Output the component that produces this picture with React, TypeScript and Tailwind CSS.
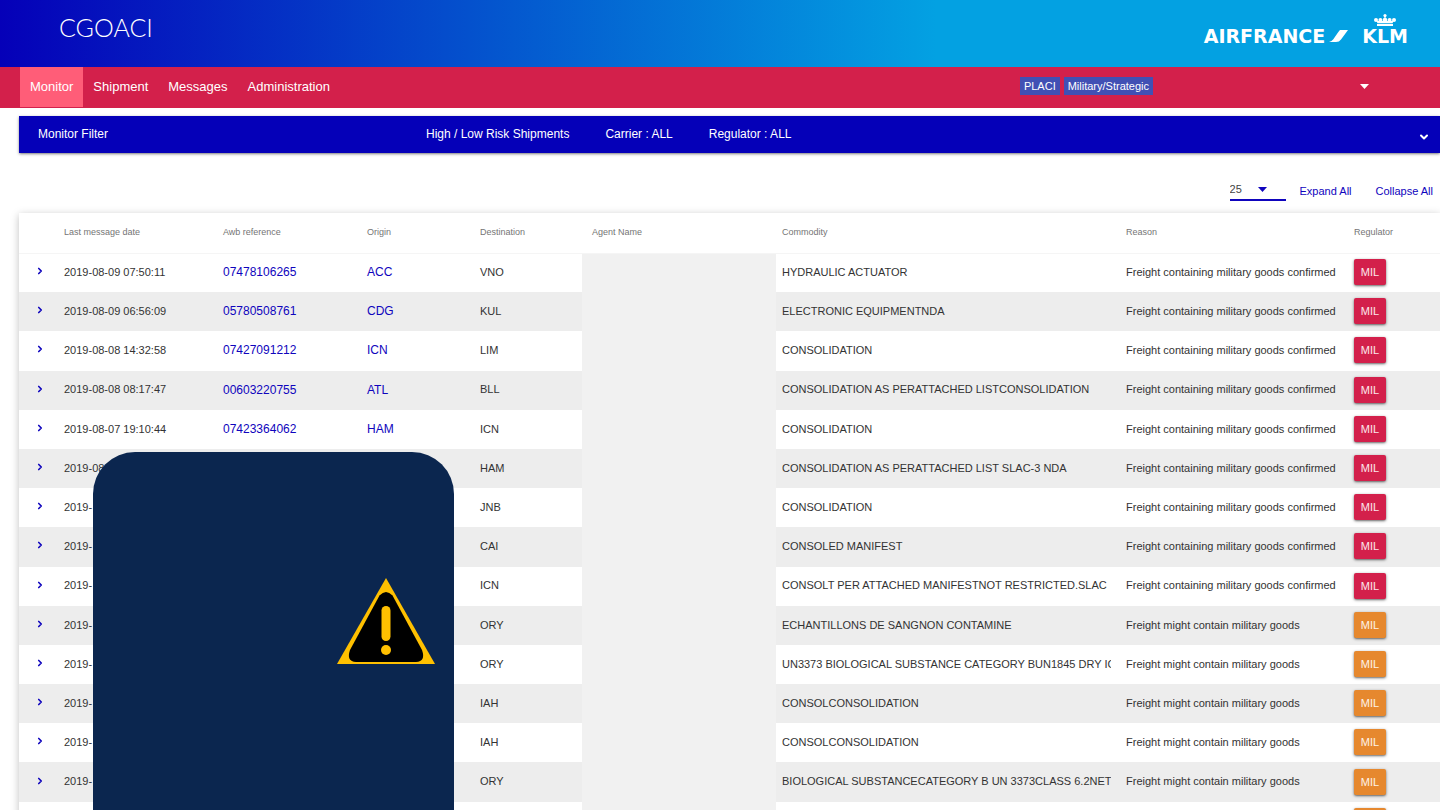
import React from "react";
import { ChevronDown, ChevronRight } from "lucide-react";

type Row = {
  date: string;
  awb: string;
  origin: string;
  destination: string;
  commodity: string;
  confirmed: boolean;
};

const rows: Row[] = [
  { date: "2019-08-09 07:50:11", awb: "07478106265", origin: "ACC", destination: "VNO", commodity: "HYDRAULIC ACTUATOR", confirmed: true },
  { date: "2019-08-09 06:56:09", awb: "05780508761", origin: "CDG", destination: "KUL", commodity: "ELECTRONIC EQUIPMENTNDA", confirmed: true },
  { date: "2019-08-08 14:32:58", awb: "07427091212", origin: "ICN", destination: "LIM", commodity: "CONSOLIDATION", confirmed: true },
  { date: "2019-08-08 08:17:47", awb: "00603220755", origin: "ATL", destination: "BLL", commodity: "CONSOLIDATION AS PERATTACHED LISTCONSOLIDATION", confirmed: true },
  { date: "2019-08-07 19:10:44", awb: "07423364062", origin: "HAM", destination: "ICN", commodity: "CONSOLIDATION", confirmed: true },
  { date: "2019-08", awb: "", origin: "", destination: "HAM", commodity: "CONSOLIDATION AS PERATTACHED LIST SLAC-3 NDA", confirmed: true },
  { date: "2019-", awb: "", origin: "", destination: "JNB", commodity: "CONSOLIDATION", confirmed: true },
  { date: "2019-", awb: "", origin: "", destination: "CAI", commodity: "CONSOLED MANIFEST", confirmed: true },
  { date: "2019-", awb: "", origin: "", destination: "ICN", commodity: "CONSOLT PER ATTACHED MANIFESTNOT RESTRICTED.SLAC", confirmed: true },
  { date: "2019-", awb: "", origin: "", destination: "ORY", commodity: "ECHANTILLONS DE SANGNON CONTAMINE", confirmed: false },
  { date: "2019-", awb: "", origin: "", destination: "ORY", commodity: "UN3373 BIOLOGICAL SUBSTANCE CATEGORY BUN1845 DRY IC", confirmed: false },
  { date: "2019-", awb: "", origin: "", destination: "IAH", commodity: "CONSOLCONSOLIDATION", confirmed: false },
  { date: "2019-", awb: "", origin: "", destination: "IAH", commodity: "CONSOLCONSOLIDATION", confirmed: false },
  { date: "2019-", awb: "", origin: "", destination: "ORY", commodity: "BIOLOGICAL SUBSTANCECATEGORY B UN 3373CLASS 6.2NET", confirmed: false },
  { date: "", awb: "", origin: "", destination: "", commodity: "", confirmed: false },
];

const navItems = ["Monitor", "Shipment", "Messages", "Administration"];

function Header() {
  return (
    <header className="flex h-[67px] shrink-0 items-start justify-between bg-linear-to-r/srgb from-[#0500b8] to-[#03a1e2] to-65% pr-8 pl-[59px] text-white">
      <h1 className="pt-[11px] font-['Lato'] text-[25px] leading-8 font-light">CGOACI</h1>
      <div className="flex items-end gap-[14px] pt-[14px] font-['DejaVu_Sans'] text-[19px] leading-5 font-bold" aria-label="Air France KLM">
        <span className="flex items-center gap-1">
          AIRFRANCE
          <svg className="h-3 w-[19px]" viewBox="0 0 19 12" fill="currentColor" aria-hidden="true">
            <path d="M11 0H19L12 9.500Q10.200 12 7 12H0Q2.800 11.300 4.300 9.300L9 2.500Q10.200 .7 11 0Z" />
          </svg>
        </span>
        <span className="flex flex-col items-center">
          <svg className="h-3 w-[22px]" viewBox="0 0 22 12" fill="currentColor" aria-hidden="true">
            <circle cx="11" cy="1.600" r="1.600" />
            <circle cx="2" cy="6" r="2" />
            <circle cx="6.400" cy="6" r="2" />
            <circle cx="11" cy="6" r="2.300" />
            <circle cx="15.600" cy="6" r="2" />
            <circle cx="20" cy="6" r="2" />
            <path d="M2.500 7L19.500 7L18.500 9.200H3.500Z" />
            <path d="M3 10H19V12H3Z" />
            <path d="M10.400 2H11.600V5H10.400Z" />
          </svg>
          <span>KLM</span>
        </span>
      </div>
    </header>
  );
}

function NavBar() {
  return (
    <nav className="flex h-[41px] shrink-0 items-stretch bg-[#d3204b] pl-5 text-[13px] text-white">
      {navItems.map((item, i) => (
        <a
          key={item}
          href="#"
          className={i === 0 ? "mb-px flex items-center bg-[#ff5d78] px-[10px]" : "mb-px flex items-center px-[10px]"}
        >
          {item}
        </a>
      ))}
      <div className="ml-auto flex items-center gap-1 pr-[71px] pb-[3px] text-[11px]">
        <span className="bg-[#4150b4] px-1 leading-[18px]">PLACI</span>
        <span className="bg-[#4150b4] px-1 leading-[18px]">Military/Strategic</span>
        <button type="button" aria-label="Account menu" className="ml-[203px] flex">
          <svg className="h-[5px] w-[9px]" viewBox="0 0 9 5" fill="currentColor" aria-hidden="true">
            <path d="M0 0H9L4.500 5Z" />
          </svg>
        </button>
      </div>
    </nav>
  );
}

function FilterBar() {
  return (
    <button
      type="button"
      className="mt-2 ml-[19px] flex h-[37px] shrink-0 items-center bg-[#0500b8] pr-[10px] pl-[19px] text-left text-xs text-white shadow-sm shadow-black/40"
    >
      <span className="w-[388px] pb-[2px]">Monitor Filter</span>
      <span className="flex gap-9 pb-[2px]">
        <span>High / Low Risk Shipments</span>
        <span>Carrier : ALL</span>
        <span>Regulator : ALL</span>
      </span>
      <ChevronDown className="mt-1 ml-auto h-3 w-3" strokeWidth={4} aria-hidden="true" />
    </button>
  );
}

function Toolbar() {
  return (
    <div className="flex h-[60px] shrink-0 items-center justify-end gap-6 pt-4 pr-[7px] text-[11px] text-[#0f04bd]">
      <div className="-mr-[10px] flex h-5 w-14 items-center border-b-2 border-[#0f04bd] pb-[2px]">
        <label htmlFor="page-size" className="sr-only">Rows per page</label>
        <select id="page-size" className="h-4 w-7 appearance-none bg-transparent text-[11px] leading-4 text-[#444]" defaultValue="25">
          <option>25</option>
          <option>50</option>
        </select>
        <svg className="h-[5px] w-[9px]" viewBox="0 0 9 5" fill="currentColor" aria-hidden="true">
          <path d="M0 0H9L4.500 5Z" />
        </svg>
      </div>
      <button type="button">Expand All</button>
      <button type="button">Collapse All</button>
    </div>
  );
}

function MonitorTable() {
  return (
    <div className="relative ml-[19px] shadow-[0_2px_8px_rgba(0,0,0,0.25)]">
      <table className="h-[628px] w-full table-fixed border-collapse text-left text-[11px] whitespace-nowrap text-[#333]">
        <colgroup>
          <col className="w-[45px]" />
          <col className="w-[159px]" />
          <col className="w-[144px]" />
          <col className="w-[113px]" />
          <col className="w-[102px]" />
          <col className="w-[194px]" />
          <col className="w-[350px]" />
          <col className="w-[228px]" />
          <col />
        </colgroup>
        <thead>
          <tr className="h-10 border-b border-[#f5f5f5] text-[9px] text-[#757575] *:p-0 *:font-normal">
            <th aria-label="Expand" />
            <th>Last message date</th>
            <th>Awb reference</th>
            <th>Origin</th>
            <th>Destination</th>
            <th><span className="pl-[10px]">Agent Name</span></th>
            <th><span className="pl-[6px]">Commodity</span></th>
            <th>Reason</th>
            <th>Regulator</th>
          </tr>
        </thead>
        <tbody>
          {rows.map((row, i) => (
            <tr key={i} className="h-[39px] even:bg-[#ededed] *:p-0 *:pb-px">
              <td>
                <button type="button" aria-label="Expand row" className="mb-[2px] ml-4 flex text-[#0f04bd]">
                  <ChevronRight className="h-[10px] w-[10px]" strokeWidth={4} aria-hidden="true" />
                </button>
              </td>
              <td>{row.date}</td>
              <td className="text-xs text-[#0f04bd]">{row.awb && <a href="#">{row.awb}</a>}</td>
              <td className="text-xs text-[#0f04bd]">{row.origin && <a href="#">{row.origin}</a>}</td>
              <td>{row.destination}</td>
              <td className="bg-[#f1f1f1]" />
              <td>
                <div className="ml-[6px] w-[329px] overflow-hidden">{row.commodity}</div>
              </td>
              <td>{row.confirmed ? "Freight containing military goods confirmed" : row.commodity && "Freight might contain military goods"}</td>
              <td>
                <span
                  className={
                    row.confirmed
                      ? "block w-8 rounded-[2px] bg-[#d3204b] text-center leading-[26px] text-white/90 shadow-sm shadow-black/50"
                      : "block w-8 rounded-[2px] bg-[#e6882e] text-center leading-[26px] text-white/90 shadow-sm shadow-black/50"
                  }
                >
                  MIL
                </span>
              </td>
            </tr>
          ))}
        </tbody>
      </table>
      <aside className="absolute top-[239px] bottom-0 left-[74px] w-[361px] rounded-t-[42px] bg-[#0b264f]">
        <svg className="mt-[126px] ml-[244px] h-[86px] w-[98px]" viewBox="0 0 98 86" role="img" aria-label="Warning">
          <path d="M49 0L98 86H0Z" fill="#ffc000" />
          <path d="M42.500 17.500Q49 10.500 55.500 17.500L85 72Q89 83.500 79 84H19Q9 83.500 13 72Z" fill="#000" />
          <path d="M49 32.500V58.500" stroke="#ffc000" strokeWidth="9" strokeLinecap="round" />
          <circle cx="49" cy="72" r="5" fill="#ffc000" />
        </svg>
      </aside>
    </div>
  );
}

export default function App() {
  return (
    <div className="flex h-screen flex-col overflow-hidden bg-white font-['Liberation_Sans',Arial,sans-serif]">
      <Header />
      <NavBar />
      <FilterBar />
      <Toolbar />
      <MonitorTable />
    </div>
  );
}
